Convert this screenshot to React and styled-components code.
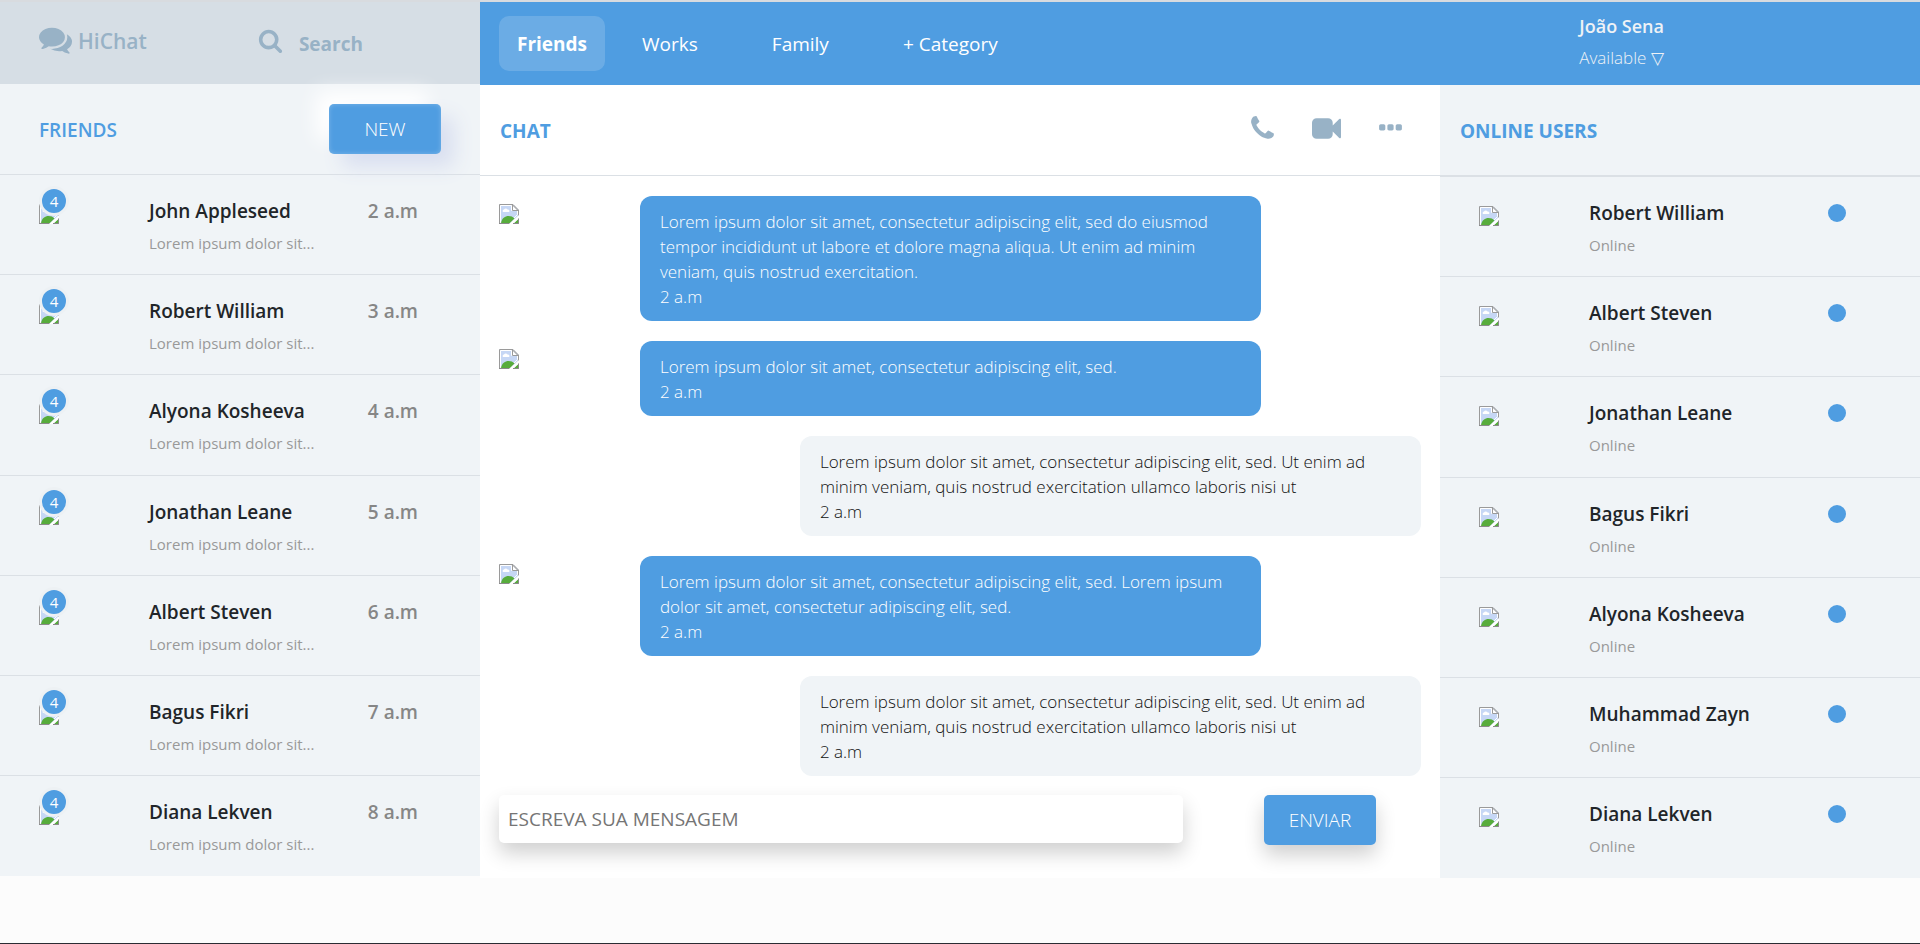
import React from "react";
import styled, { createGlobalStyle, css } from "styled-components";

const GlobalStyle = createGlobalStyle`
  * { box-sizing: border-box; }
  body {
    margin: 0;
    background: #fcfcfc;
    color: #212529;
    font-family: "Open Sans", "Noto Sans", sans-serif;
    font-size: 17px;
    line-height: 25px;
  }
  h1, h2, h3, p, ul { margin: 0; padding: 0; font: inherit; }
  button, input { font: inherit; border: 0; }
  a { color: inherit; text-decoration: none; }
`;

const BLUE = "#4f9de1";
const SLATE = "#98b2c6";
const PALE = "#f0f4f7";
const LINE = "#dbe0e5";

const Page = styled.div`
  min-height: 100vh;
  display: flex;
  flex-direction: column;
  border-top: 2px solid #d8dbdf;
  border-bottom: 1px solid #2b2c33;
`;

const Layout = styled.div`
  display: grid;
  grid-template-columns: 1fr 3fr;
`;

const Sidebar = styled.aside`
  display: flex;
  flex-direction: column;
  padding-bottom: 2px;
`;

const Brand = styled.header`
  display: grid;
  grid-template-columns: 45% 1fr;
  align-items: center;
  height: 82px;
  padding: 0 39px;
  background: #d6dee5;
  color: ${SLATE};
`;

const BrandName = styled.h1`
  display: flex;
  align-items: center;
  gap: 6px;
  padding-bottom: 4px;
  font-size: 21px;
  font-weight: 600;
  svg { margin-bottom: 4px; }
`;

const SearchLink = styled.a`
  display: flex;
  align-items: center;
  gap: 16px;
  padding: 2px 0 0 38px;
  font-size: 19px;
  font-weight: 700;
  svg { margin-bottom: 8px; }
`;

const PanelHead = styled.div`
  display: flex;
  align-items: center;
  justify-content: space-between;
  height: 91px;
  padding: 0 ${(p) => p.$pad || 20}px;
  background: ${(p) => (p.$pale ? PALE : "#fff")};
  border-bottom: 1px solid ${LINE};
`;

const PanelTitle = styled.h2`
  padding-top: 2px;
  color: ${BLUE};
  font-size: 19px;
  font-weight: ${(p) => (p.$strong ? 700 : 600)};
`;

const Button = styled.button`
  width: 112px;
  height: 50px;
  border-radius: 5px;
  background: ${BLUE};
  color: #fff;
  font-size: 19px;
  font-weight: 300;
  cursor: pointer;
  ${(p) =>
    p.$glow
      ? css`
          position: relative;
          box-shadow: 13px 13px 20px #d9dff0, -13px -13px 20px #fff,
            inset 0 0 5px rgba(255, 255, 255, 0.25);
        `
      : css`
          box-shadow: 0 10px 20px rgba(0, 0, 0, 0.19);
        `}
`;

const PersonList = styled.ul`
  flex: 1;
  display: flex;
  flex-direction: column;
  list-style: none;
  background: ${PALE};
`;

const PersonRow = styled.li`
  flex: 1;
  display: grid;
  grid-template-columns: 110px 1fr auto;
  min-height: 100px;
  padding: 24px 39px 0;
  border-bottom: 1px solid ${LINE};
  &:last-child { border-bottom: 0; }
`;

const PersonName = styled.h3`
  font-size: 19px;
  font-weight: 600;
`;

const PersonNote = styled.p`
  margin-top: 7px;
  color: #999;
  font-size: 15px;
`;

const PersonTime = styled.time`
  padding-right: 23px;
  color: #868686;
  font-size: 19px;
  font-weight: 600;
`;

const OnlineDot = styled.span`
  width: 18px;
  height: 18px;
  margin: 3px 35px 0 0;
  border-radius: 50%;
  background: ${BLUE};
`;

const Avatar = styled.div`
  position: relative;
  width: 20px;
  height: 20px;
  margin-top: 5px;
`;

const Badge = styled.span`
  position: absolute;
  left: 0;
  top: -18px;
  width: 30px;
  height: 30px;
  border: 3px solid #edf1f4;
  border-radius: 50%;
  background: ${BLUE};
  color: #fff;
  font-size: 15px;
  line-height: 24px;
  text-align: center;
`;

const Content = styled.main`
  display: flex;
  flex-direction: column;
`;

const TopBar = styled.header`
  display: grid;
  grid-template-columns: 2fr 1fr;
  height: 83px;
  padding-left: 19px;
  background: ${BLUE};
  color: #fff;
`;

const Nav = styled.nav`
  display: flex;
  align-items: center;
  gap: 38px;
`;

const NavLink = styled.a`
  padding: 16px 18px 14px;
  border-radius: 10px;
  font-size: 19px;
  ${(p) =>
    p.$active &&
    css`
      margin-right: -19px;
      background: rgba(255, 255, 255, 0.16);
      font-weight: 700;
    `}
`;

const Profile = styled.div`
  padding: 12px 0 0 133px;
`;

const ProfileName = styled.p`
  color: #eef2f6;
  font-size: 18px;
  font-weight: 600;
`;

const ProfileStatus = styled.button`
  margin-top: 6px;
  padding: 0;
  background: none;
  color: #eef2f6;
  font-size: 17px;
  font-weight: 300;
`;

const Columns = styled.div`
  flex: 1;
  display: grid;
  grid-template-columns: 2fr 1fr;
`;

const Chat = styled.section`
  background: #fff;
`;

const Actions = styled.div`
  display: flex;
  align-items: center;
  gap: 35px;
  padding-right: 15px;
`;

const IconButton = styled.button`
  display: flex;
  padding: 0 0 4px;
  background: none;
  color: ${SLATE};
`;

const Messages = styled.div`
  display: grid;
  gap: 20px;
  padding: 20px 19px 19px 0;
`;

const Message = styled.article`
  display: grid;
  grid-template-columns: ${(p) => (p.$own ? "34% 66%" : "17% 66%")};
`;

const Picture = styled.div`
  padding: 8px 0 0 19px;
`;

const Bubble = styled.div`
  grid-column: 2;
  padding: 13px 20px 12px;
  border-radius: 12px;
  background: ${(p) => (p.$own ? PALE : BLUE)};
  color: ${(p) => (p.$own ? "#111" : "#fff")};
  font-weight: 300;
`;

const Composer = styled.form`
  display: flex;
  justify-content: space-between;
  align-items: flex-start;
  padding: 0 64px 33px 19px;
`;

const MessageInput = styled.input`
  width: 78%;
  height: 48px;
  padding: 0 9px;
  border-radius: 5px;
  background: #fff;
  font-size: 19px;
  box-shadow: 0 10px 20px rgba(0, 0, 0, 0.19);
  &::placeholder { color: #757575; opacity: 1; }
`;

const Online = styled.section`
  display: flex;
  flex-direction: column;
  background: ${PALE};
`;

const OnlineList = styled(PersonList)`
  border-top: 1px solid ${LINE};
`;

const PATHS = {
  comments:
    "M1408 768q0 139-94 257t-256.500 186.500-353.500 68.500q-86 0-176-16-124 88-278 128-36 9-86 16h-3q-11 0-20.500-8t-11.500-21q-1-3-1-6.500t.5-6.500 2-6l2.500-5 3.500-5.500 4-5 4.500-5 4-4.500q5-6 23-25t26-29.500 22.500-29 25-38.500 20.500-44q-124-72-195-177t-71-224q0-139 94-257t256.500-186.500 353.500-68.500 353.500 68.500 256.500 186.500 94 257zm384 256q0 120-71 224.500t-195 176.500q10 24 20.500 44t25 38.500 22.500 29 26 29.500 23 25q1 1 4 4.500t4.500 5 4 5 3.500 5.500l2.500 5 2 6 .5 6.500-1 6.500q-3 14-13 22t-22 7q-50-7-86-16-154-40-278-128-90 16-176 16-271 0-472-132 58 4 88 4 161 0 309-45t264-129q125-92 192-212t67-254q0-77-23-152 129 71 204 178t75 230z",
  search:
    "M1216 832q0-185-131.500-316.500t-316.500-131.500-316.500 131.500-131.500 316.500 131.500 316.500 316.500 131.500 316.500-131.500 131.500-316.500zm512 832q0 52-38 90t-90 38q-54 0-90-38l-343-342q-179 124-399 124-143 0-273.500-55.500t-225-150-150-225-55.500-273.500 55.500-273.500 150-225 225-150 273.500-55.500 273.500 55.500 225 150 150 225 55.500 273.500q0 220-124 399l343 343q37 37 37 90z",
  phone:
    "M1600 1240q0 27-10 70.500t-21 68.500q-21 50-122 106-94 51-186 51-27 0-53-3.500t-57.500-12.500-47-14.500-55.500-20.500-49-18q-98-35-175-83-127-79-264-216t-216-264q-48-77-83-175-3-9-18-49t-20.500-55.500-14.500-47-12.500-57.500-3.500-53q0-92 51-186 56-101 106-122 25-11 68.500-21t70.500-10q14 0 21 3 18 6 53 76 11 19 30 54t35 63.500 31 53.500q3 4 17.500 25t21.500 35.500 7 28.500q0 20-28.500 50t-62 55-62 53-28.500 46q0 9 5 22.500t8.500 20.500 14 24 11.500 19q76 137 174 235t235 174q2 1 19 11.500t24 14 20.500 8.500 22.500 5q18 0 46-28.500t53-62 55-62 50-28.500q14 0 28.500 7t35.500 21.500 25 17.500q25 15 53.500 31t63.500 35 54 30q70 35 76 53 3 7 3 21z",
  video:
    "M1792 352v1088q0 42-39 59-13 5-25 5-27 0-45-19l-403-403v166q0 119-84.500 203.500t-203.500 84.500h-704q-119 0-203.500-84.500t-84.500-203.500v-704q0-119 84.500-203.500t203.500-84.500h704q119 0 203.500 84.500t84.500 203.500v165l403-402q18-19 45-19 12 0 25 5 39 17 39 59z",
  more:
    "M576 736v192q0 40-28 68t-68 28h-192q-40 0-68-28t-28-68v-192q0-40 28-68t68-28h192q40 0 68 28t28 68zm512 0v192q0 40-28 68t-68 28h-192q-40 0-68-28t-28-68v-192q0-40 28-68t68-28h192q40 0 68 28t28 68zm512 0v192q0 40-28 68t-68 28h-192q-40 0-68-28t-28-68v-192q0-40 28-68t68-28h192q40 0 68 28t28 68z",
};

const Icon = ({ name, size }) => (
  <svg width={size} height={size} viewBox="0 0 1792 1792" fill="currentColor" aria-hidden="true">
    <path d={PATHS[name]} />
  </svg>
);

const MissingPicture = () => (
  <svg width="20" height="20" viewBox="0 0 20 20" aria-hidden="true" display="block">
    <path d="M.5.5H14l5.500 5.500v13.500H.5z" fill="#c6d7f5" stroke="#9a9a9a" />
    <path d="M1.500 1.500h11v5h6v4l-8 8h-9z" fill="#c6d7f5" stroke="#fff" strokeWidth="1" />
    <path d="M4 8a1.500 1.500 0 0 1 1-2.500 2 2 0 0 1 3.500 0A1.500 1.500 0 0 1 10 8z" fill="#fff" />
    <path d="M2 19c1-5 4-7 7.500-7 2.500 0 4.500.8 6 2.500L11 19z" fill="#57ac3c" />
    <path d="M13.500 1v5.500H19z" fill="#fff" stroke="#9a9a9a" />
    <path d="M15 19l4-4v4z" fill="#57ac3c" />
    <path d="M10 20 20 11v3.500L14 20z" fill="#fff" />
    <path d="M0 19.500h10M14 19.500h5.500v-5" fill="none" stroke="#8a8a8a" />
  </svg>
);

const friends = [
  ["John Appleseed", "2 a.m"],
  ["Robert William", "3 a.m"],
  ["Alyona Kosheeva", "4 a.m"],
  ["Jonathan Leane", "5 a.m"],
  ["Albert Steven", "6 a.m"],
  ["Bagus Fikri", "7 a.m"],
  ["Diana Lekven", "8 a.m"],
];

const onlineUsers = [
  "Robert William",
  "Albert Steven",
  "Jonathan Leane",
  "Bagus Fikri",
  "Alyona Kosheeva",
  "Muhammad Zayn",
  "Diana Lekven",
];

const reply =
  "Lorem ipsum dolor sit amet, consectetur adipiscing elit, sed. Ut enim ad minim veniam, quis nostrud exercitation ullamco laboris nisi ut";

const messages = [
  {
    text: "Lorem ipsum dolor sit amet, consectetur adipiscing elit, sed do eiusmod tempor incididunt ut labore et dolore magna aliqua. Ut enim ad minim veniam, quis nostrud exercitation.",
  },
  { text: "Lorem ipsum dolor sit amet, consectetur adipiscing elit, sed." },
  { text: reply, own: true },
  {
    text: "Lorem ipsum dolor sit amet, consectetur adipiscing elit, sed. Lorem ipsum dolor sit amet, consectetur adipiscing elit, sed.",
  },
  { text: reply, own: true },
];

export default function App() {
  return (
    <Page>
      <GlobalStyle />
      <Layout>
        <Sidebar>
          <Brand>
            <BrandName>
              <Icon name="comments" size={33} />
              HiChat
            </BrandName>
            <SearchLink href="#search">
              <Icon name="search" size={25} />
              Search
            </SearchLink>
          </Brand>
          <PanelHead $pad={39} $pale>
            <PanelTitle>FRIENDS</PanelTitle>
            <Button type="button" $glow>NEW</Button>
          </PanelHead>
          <PersonList>
            {friends.map(([name, time]) => (
              <PersonRow key={name}>
                <Avatar>
                  <MissingPicture />
                  <Badge>4</Badge>
                </Avatar>
                <div>
                  <PersonName>{name}</PersonName>
                  <PersonNote>Lorem ipsum dolor sit...</PersonNote>
                </div>
                <PersonTime>{time}</PersonTime>
              </PersonRow>
            ))}
          </PersonList>
        </Sidebar>
        <Content>
          <TopBar>
            <Nav>
              <NavLink href="#friends" $active>Friends</NavLink>
              <NavLink href="#works">Works</NavLink>
              <NavLink href="#family">Family</NavLink>
              <NavLink href="#category">+ Category</NavLink>
            </Nav>
            <Profile>
              <ProfileName>João Sena</ProfileName>
              <ProfileStatus type="button">Available ▽</ProfileStatus>
            </Profile>
          </TopBar>
          <Columns>
            <Chat>
              <PanelHead>
                <PanelTitle $strong>CHAT</PanelTitle>
                <Actions>
                  <IconButton type="button" aria-label="Call"><Icon name="phone" size={29} /></IconButton>
                  <IconButton type="button" aria-label="Video call"><Icon name="video" size={29} /></IconButton>
                  <IconButton type="button" aria-label="More"><Icon name="more" size={29} /></IconButton>
                </Actions>
              </PanelHead>
              <Messages>
                {messages.map(({ text, own }, i) => (
                  <Message key={i} $own={own}>
                    {!own && <Picture><MissingPicture /></Picture>}
                    <Bubble $own={own}>
                      <p>{text}</p>
                      <time>2 a.m</time>
                    </Bubble>
                  </Message>
                ))}
              </Messages>
              <Composer>
                <MessageInput type="text" placeholder="ESCREVA SUA MENSAGEM" aria-label="Mensagem" />
                <Button type="button">ENVIAR</Button>
              </Composer>
            </Chat>
            <Online>
              <PanelHead $pale>
                <PanelTitle $strong>ONLINE USERS</PanelTitle>
              </PanelHead>
              <OnlineList>
                {onlineUsers.map((name) => (
                  <PersonRow key={name}>
                    <Avatar><MissingPicture /></Avatar>
                    <div>
                      <PersonName>{name}</PersonName>
                      <PersonNote>Online</PersonNote>
                    </div>
                    <OnlineDot />
                  </PersonRow>
                ))}
              </OnlineList>
            </Online>
          </Columns>
        </Content>
      </Layout>
    </Page>
  );
}
